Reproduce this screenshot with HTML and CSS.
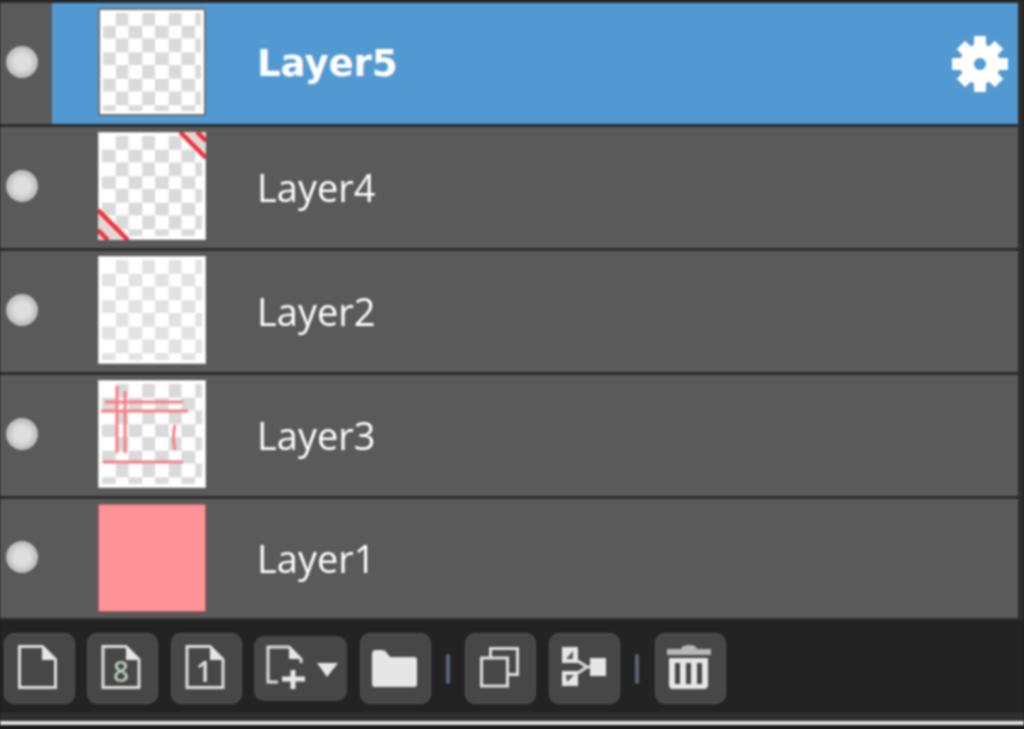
FILE: index.html
```html
<!DOCTYPE html>
<html lang="en">
<head>
    <meta charset="UTF-8">
    <meta name="viewport" content="width=device-width, initial-scale=1.0">
    <title>Layers</title>
    <link rel="stylesheet" href="styles.css">
</head>
<body>
    <div class="panel">
        <div class="layers">
            <div class="layer selected">
                <div class="eye"><span class="dot"></span></div>
                <div class="row-main">
                    <div class="thumb checker dark-edge"></div>
                    <div class="name">Layer5</div>
                    <svg class="gear" viewBox="-28 -28 56 56">
                        <g fill="#fff">
                            <circle r="20"/>
                            <rect x="-6" y="-28" width="12" height="56"/>
                            <rect x="-6" y="-28" width="12" height="56" transform="rotate(90)"/>
                            <rect x="-6" y="-27" width="12" height="54" transform="rotate(45)"/>
                            <rect x="-6" y="-27" width="12" height="54" transform="rotate(-45)"/>
                        </g>
                        <circle r="6" fill="#5399d1"/>
                    </svg>
                </div>
            </div>
            <div class="layer">
                <div class="eye"><span class="dot"></span></div>
                <div class="row-main">
                    <div class="thumb checker">
                        <svg class="thumb-art" viewBox="0 0 108 108">
                            <path d="M82 0h26v26zM0 78l30 30H0z" fill="#e4d6d6"/>
                            <g stroke="#ee3338" stroke-width="4.5" fill="none">
                                <path d="M82 0l26 26"/>
                                <path d="M99 0l9 9"/>
                                <path d="M0 78l30 30"/>
                                <path d="M0 98l10 10"/>
                            </g>
                        </svg>
                    </div>
                    <div class="name">Layer4</div>
                </div>
            </div>
            <div class="layer">
                <div class="eye"><span class="dot"></span></div>
                <div class="row-main">
                    <div class="thumb checker faint"></div>
                    <div class="name">Layer2</div>
                </div>
            </div>
            <div class="layer">
                <div class="eye"><span class="dot"></span></div>
                <div class="row-main">
                    <div class="thumb checker">
                        <svg class="thumb-art" viewBox="0 0 108 108">
                            <g stroke="#f77f82" stroke-width="3" fill="none">
                                <path d="M19 6v67"/>
                                <path d="M27 11v62"/>
                                <path d="M7 22h78"/>
                                <path d="M3 31h87"/>
                                <path d="M5 82h80"/>
                                <path d="M77 45q-3 12 0 25"/>
                            </g>
                        </svg>
                    </div>
                    <div class="name">Layer3</div>
                </div>
            </div>
            <div class="layer last">
                <div class="eye"><span class="dot"></span></div>
                <div class="row-main">
                    <div class="thumb solid"></div>
                    <div class="name">Layer1</div>
                </div>
            </div>
        </div>

        <div class="toolbar">
            <button class="tool" type="button">
                <svg viewBox="0 0 69 69"><path class="line thin" d="M14.5 12.5h23l13 13v28h-36z"/><path class="fill" d="M37 12l14 14H37z"/></svg>
            </button>
            <button class="tool" type="button">
                <svg viewBox="0 0 69 69"><path class="line thin" d="M15 12.5h23l13 13v28H15z"/><path class="fill" d="M38 12l14 14H38z"/><text class="digit eight" x="33" y="48">8</text></svg>
            </button>
            <button class="tool" type="button">
                <svg viewBox="0 0 69 69"><path class="line thin" d="M15 12.5h23l13 13v28H15z"/><path class="fill" d="M38 12l14 14H38z"/><text class="digit" x="32" y="48">1</text></svg>
            </button>
            <button class="tool split" type="button">
                <svg viewBox="0 0 93 65"><path class="line thin" d="M24 46h-10V11h21l12 12v4"/><path class="fill" d="M35 10l12 13H35z"/><path class="line bold" d="M39 34v19M28 43h23"/><path class="fill" d="M63 27h21L73 41z"/></svg>
            </button>
            <button class="tool" type="button">
                <svg viewBox="0 0 69 69"><path class="fill" d="M11 20q0-4 4-4h6q3 0 5 3l3 4h24q3 0 3 3v24q0 3-3 3H14q-3 0-3-3z"/></svg>
            </button>
            <span class="sep"></span>
            <button class="tool" type="button">
                <svg viewBox="0 0 69 69"><path class="line thin" d="M15.5 24h26v28h-26z"/><path class="line thin" d="M24.5 24v-9.500h27v26h-10"/></svg>
            </button>
            <button class="tool" type="button">
                <svg viewBox="0 0 69 69"><path class="fill" d="M12 13h16v16H12zM12 37h16v15H12zM40 24h16v18H40z"/><path class="mark" d="M23 17v8h-7zM16 41h8l-7 7z"/><path class="line thin" d="M28 27l9 6-9 6M36 33h4"/></svg>
            </button>
            <span class="sep"></span>
            <button class="tool" type="button">
                <svg viewBox="0 0 69 69"><path class="fill soft" d="M11 15h44v6H11zM25 15q1-4 8-4t8 4z"/><path class="fill" fill-rule="evenodd" d="M13 24h39v27q0 4-4 4H17q-4 0-4-4zM19 29v21h5V29zM30 29v21h5V29zM41 29v21h5V29z"/></svg>
            </button>
        </div>
        <div class="status-band"></div>
        <div class="status-line"></div>
    </div>
</body>
</html>
```

FILE: styles.css
```css
html, body {
    margin: 0;
    padding: 0;
}

body {
    width: 1024px;
    height: 729px;
    overflow: hidden;
    background-color: #1c1c1c;
    font-family: "Open Sans", "Noto Sans", sans-serif;
}

.panel {
    display: flex;
    flex-direction: column;
    filter: blur(0.85px);
}

/* Layer list */
.layers {
    display: flex;
    flex-direction: column;
    gap: 3px;
    box-sizing: border-box;
    height: 620px;
    padding: 3px 6px 0 0;
    background-color: #2c2c2c;
}

.layer {
    display: flex;
    flex: none;
    height: 121px;
    background-color: #5a5a5a;
}

.layer.last {
    height: 119px;
}

.eye {
    display: flex;
    align-items: center;
    justify-content: center;
    box-sizing: border-box;
    width: 52px;
    padding: 0 8px 3px 0;
}

.dot {
    width: 32px;
    height: 32px;
    border-radius: 50%;
    background: radial-gradient(circle, #dedede 0 35%, #bdbdbd 65%, #aeaeae 100%);
}

.row-main {
    flex: 1;
    display: flex;
    align-items: center;
    padding-left: 46px;
}

.selected .row-main {
    background-color: #5399d1;
}

.thumb {
    position: relative;
    flex: none;
    box-sizing: border-box;
    width: 108px;
    height: 108px;
    margin: 0 51px 3px 0;
    border: 1px solid #d8d8d8;
}

.layer.last .thumb {
    margin-bottom: 1px;
}

.checker {
    background-color: #fff;
    background-image: conic-gradient(#dadada 25%, #fff 0 50%, #dadada 0 75%, #fff 0);
    background-size: 26.500px 26.500px;
    background-position: 3px 3px;
    box-shadow: inset 0 0 0 3px #fff;
}

.checker.dark-edge {
    border: 2px solid #707070;
    background-position: 2px 2px;
}

.checker.faint {
    background-image: conic-gradient(#e2e2e2 25%, #fff 0 50%, #e2e2e2 0 75%, #fff 0);
}

.solid {
    background-color: #ff9296;
    border: 1px solid #b56063;
}

.thumb-art {
    position: absolute;
    left: -1px;
    top: -1px;
    width: 108px;
    height: 108px;
}

.name {
    flex: 1;
    padding-bottom: 1px;
    font-size: 38px;
    color: #fff;
    line-height: 1;
}

.selected .name {
    padding-bottom: 0;
    font-family: "DejaVu Sans", sans-serif;
    font-size: 37px;
    font-weight: 700;
}

.gear {
    width: 56px;
    height: 56px;
    margin-right: 10px;
}

/* Bottom toolbar */
.toolbar {
    display: flex;
    align-items: center;
    gap: 12.400px;
    box-sizing: border-box;
    height: 93px;
    padding: 4px 0 0 4px;
    background-color: #232323;
}

.tool {
    flex: none;
    width: 71px;
    height: 71px;
    padding: 0;
    border: 1px solid #565656;
    border-radius: 10px;
    background-color: #474747;
}

.tool svg {
    display: block;
    width: 100%;
    height: 100%;
}

.tool.split {
    width: 93px;
    height: 65px;
    border: none;
}

.sep {
    flex: none;
    width: 4px;
    height: 30px;
    margin: 0 3px;
    border-radius: 2px;
    background-color: #5c6673;
}

.line {
    fill: none;
    stroke: #dedede;
    stroke-width: 3.500;
}

.line.thin {
    stroke-width: 3;
}

.line.bold {
    stroke: #e8e8e8;
    stroke-width: 5;
}

.fill {
    fill: #e6e6e6;
}

.fill.soft {
    fill: #b8b8b8;
}

.mark {
    fill: #555;
}

.digit {
    font-family: "Open Sans", sans-serif;
    font-size: 28px;
    font-weight: 600;
    fill: #e6e6e6;
    text-anchor: middle;
}

.digit.eight {
    fill: #b9c9b9;
}

.status-band {
    height: 8px;
    background-color: #303030;
}

.status-line {
    height: 4px;
    background-color: #e2e2e2;
}
```
